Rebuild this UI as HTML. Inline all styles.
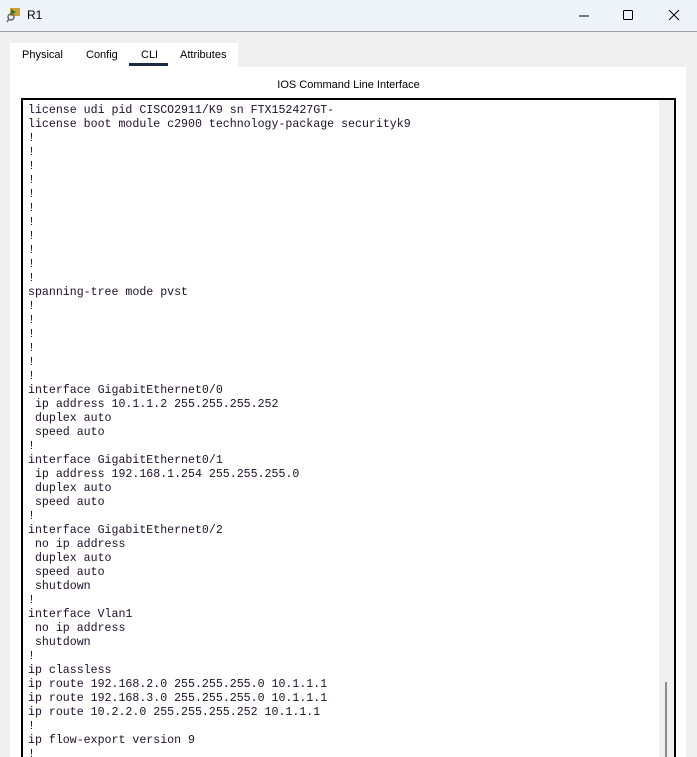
<!DOCTYPE html>
<html style="overflow:hidden;height:757px"><head><style>
body{margin:0;width:697px;height:757px;overflow:hidden;background:#efefef;font-family:"Liberation Sans",sans-serif;position:relative}
.title{position:absolute;left:0;top:0;width:697px;height:31px;background:#eef2f9;border-bottom:1px solid #a0a0a0}
.title .t{position:absolute;left:27px;top:8px;font-size:12px;color:#000}
.tabs{position:absolute;left:10px;top:43px;width:228px;height:24px;background:#fff}
.tab{position:absolute;top:6px;font-size:11px;color:#000}
.ul{position:absolute;left:129px;top:63px;width:39px;height:3px;background:#1a2a44}
.panel{position:absolute;left:10px;top:67px;width:676px;height:690px;background:#fff}
.hdr{position:absolute;left:0;width:697px;top:79px;text-align:center;font-size:11px;color:#000}
.term{position:absolute;left:21px;top:98px;width:651px;height:657px;border:2px solid #000;border-bottom:none;background:#fff;overflow:hidden}
.sb{position:absolute;left:636px;top:0;width:16px;height:670px;background:#efefef}
.thumb{position:absolute;left:642px;top:582px;width:2px;height:100px;background:#8a8a8a}
pre{margin:0;position:absolute;left:5px;top:4px;font-family:"Liberation Mono",monospace;font-size:11.6px;line-height:14px;color:#1e0f28}
</style></head><body>
<div class="title"><svg style="position:absolute;left:6px;top:7px" width="16" height="16"><rect x="4" y="1" width="10" height="8" fill="#c9a23a"/><path d="M5 2l5 3-5 3z" fill="#2a7a2a"/><circle cx="5" cy="10" r="3" fill="none" stroke="#666" stroke-width="1.5"/><path d="M3 12l-2 3" stroke="#666" stroke-width="1.5"/></svg><span class="t">R1</span>
<svg style="position:absolute;left:578px;top:9px" width="14" height="14"><path d="M1 7h10" stroke="#000"/></svg>
<svg style="position:absolute;left:622px;top:9px" width="14" height="14"><rect x="1.5" y="1.5" width="9" height="9" rx="1" fill="none" stroke="#000"/></svg>
<svg style="position:absolute;left:668px;top:9px" width="14" height="14"><path d="M1 1l10 10M11 1l-10 10" stroke="#000"/></svg>
</div>
<div class="tabs"><span class="tab" style="left:12px">Physical</span><span class="tab" style="left:76px">Config</span><span class="tab" style="left:131px">CLI</span><span class="tab" style="left:170px">Attributes</span></div>
<div class="ul"></div>
<div class="panel"></div>
<div class="hdr">IOS Command Line Interface</div>
<div class="term"><div class="sb"></div><div class="thumb"></div>
<pre>license udi pid CISCO2911/K9 sn FTX152427GT-
license boot module c2900 technology-package securityk9
!
!
!
!
!
!
!
!
!
!
!
spanning-tree mode pvst
!
!
!
!
!
!
interface GigabitEthernet0/0
 ip address 10.1.1.2 255.255.255.252
 duplex auto
 speed auto
!
interface GigabitEthernet0/1
 ip address 192.168.1.254 255.255.255.0
 duplex auto
 speed auto
!
interface GigabitEthernet0/2
 no ip address
 duplex auto
 speed auto
 shutdown
!
interface Vlan1
 no ip address
 shutdown
!
ip classless
ip route 192.168.2.0 255.255.255.0 10.1.1.1
ip route 192.168.3.0 255.255.255.0 10.1.1.1
ip route 10.2.2.0 255.255.255.252 10.1.1.1
!
ip flow-export version 9
!</pre></div>
</body></html>
